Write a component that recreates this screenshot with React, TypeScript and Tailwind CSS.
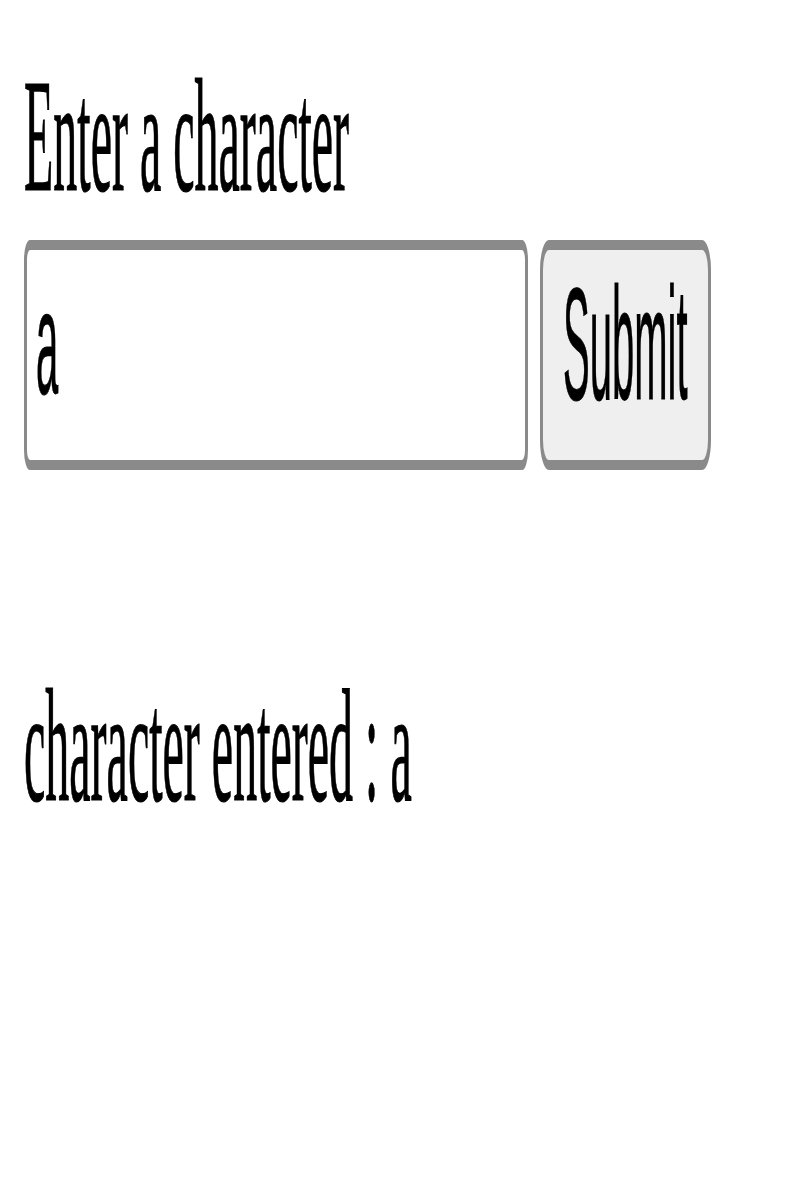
export default function App() {
  return (
    <div className="h-[1200px] w-[800px] overflow-hidden bg-white">
      {/* small page, stretched like the screenshot */}
      <div className="w-[266.67px] origin-top-left scale-x-[3] scale-y-[10] pl-[8px] pt-[4.8px] text-black">
        <div className="font-['Liberation_Serif','Times_New_Roman',serif] text-[16px] leading-[18px] [-webkit-text-stroke:0.12px_black]">Enter a character</div>
        <div className="mt-[1.2px] flex h-[23px] items-stretch gap-[4.3px]">
          <div className="flex w-[168px] items-center rounded-[2px] border border-[#8a8a8a] bg-white pb-[2.2px] pl-[3px] font-['Liberation_Sans',Arial,sans-serif] text-[13.33px] leading-none [-webkit-text-stroke:0.08px_black]">
            <span className="inline-block scale-y-[1.1]">a</span>
          </div>
          <button
            type="button"
            className="flex w-[56.3px] items-center justify-center rounded-[3px] border border-[#8a8a8a] bg-[#efefef] pb-[2.6px] font-['Liberation_Sans',Arial,sans-serif] text-[13.33px] leading-none text-black [-webkit-text-stroke:0.08px_black]"
          >
            <span className="inline-block scale-y-[1.2]">Submit</span>
          </button>
        </div>
        <p className="mt-[18.6px] font-['Liberation_Serif','Times_New_Roman',serif] text-[16px] leading-[18px] [-webkit-text-stroke:0.12px_black]">character entered : a</p>
      </div>
    </div>
  );
}
